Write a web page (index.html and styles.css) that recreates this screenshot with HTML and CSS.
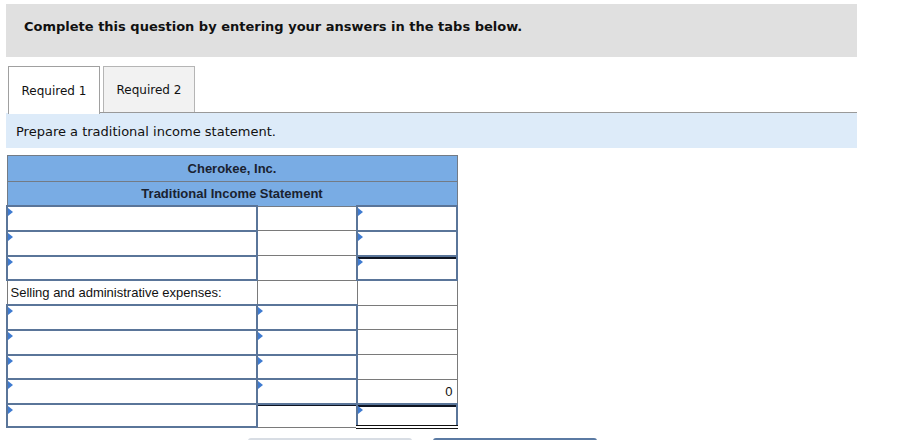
FILE: index.html
```html
<!DOCTYPE html>
<html>
<head>
<meta charset="utf-8">
<link rel="stylesheet" href="styles.css">
</head>
<body>
<div class="page">
  <div class="instr">Complete this question by entering your answers in the tabs below.</div>
  <div class="tabs">
    <div class="tab active">Required 1</div>
    <div class="tab">Required 2</div>
    <div class="tabline"></div>
  </div>
  <div class="prompt">Prepare a traditional income statement.</div>
  <table class="stmt">
    <colgroup><col class="c1"><col class="c2"><col class="c3"></colgroup>
    <tr class="h1"><th colspan="3">Cherokee, Inc.</th></tr>
    <tr class="h2"><th colspan="3">Traditional Income Statement</th></tr>
    <tr><td class="in"></td><td></td><td class="in"></td></tr>
    <tr><td class="in"></td><td></td><td class="in"></td></tr>
    <tr><td class="in"></td><td></td><td class="in topline"></td></tr>
    <tr><td class="label">Selling and administrative expenses:</td><td></td><td></td></tr>
    <tr><td class="in"></td><td class="in"></td><td></td></tr>
    <tr><td class="in"></td><td class="in"></td><td></td></tr>
    <tr><td class="in"></td><td class="in"></td><td></td></tr>
    <tr><td class="in"></td><td class="in"></td><td class="num">0</td></tr>
    <tr class="last"><td class="in"></td><td class="topline thin"></td><td class="in topline dbl"></td></tr>
  </table>
  <div class="buttons">
    <div class="btn prev"></div>
    <div class="btn next"></div>
  </div>
</div>
</body>
</html>
```
FILE: styles.css
```css
html, body {
  margin: 0;
  padding: 0;
  background: #fff;
}
.page {
  padding: 4px 0 0 6px;
  width: 851px;
  font-family: "DejaVu Sans", Verdana, sans-serif;
  color: #111;
}
.instr {
  background: #e0e0e0;
  height: 53px;
  box-sizing: border-box;
  padding: 15px 0 0 18px;
  font-weight: bold;
  font-size: 13px;
  line-height: 16px;
}
.tabs {
  display: flex;
  align-items: flex-end;
  margin-top: 8px;
  padding-left: 2px;
  height: 48px;
}
.tab {
  width: 92px;
  height: 47px;
  box-sizing: border-box;
  border: 1px solid #b5b5b5;
  border-bottom: none;
  background: #f2f2f2;
  font-size: 12px;
  display: flex;
  align-items: center;
  justify-content: center;
  color: #111;
}
.tab.active {
  background: #fff;
  border-color: #a0a0a0;
  height: 48px;
  margin-bottom: -1px;
  position: relative;
  z-index: 1;
}
.tab.active + .tab { margin-left: 3px; }
.tabline {
  flex: 1;
  height: 0;
  border-bottom: 1px solid #999;
  margin-left: -95px;
}
.prompt {
  background: #ddebf9;
  height: 35px;
  box-sizing: border-box;
  padding: 11px 0 0 10px;
  font-size: 13px;
  line-height: 16px;
}
.stmt {
  margin-top: 7px;
  border-collapse: collapse;
  table-layout: fixed;
  width: 450px;
  font-family: "Liberation Sans", Arial, sans-serif;
  font-size: 13px;
  color: #111;
}
col.c1 { width: 250px; }
col.c2 { width: 100px; }
col.c3 { width: 100px; }
.stmt th {
  background: #79ace4;
  border: 1px solid #737b85;
  font-weight: bold;
  color: #1a2230;
  padding: 0;
}
.stmt tr.h1 th { height: 25px; }
.stmt tr.h2 th { height: 23px; }
.stmt td {
  border: 1px solid #7a7a7a;
  height: 22.75px;
  padding: 0 3px;
  position: relative;
}
.stmt tr.last td { height: 20px; }
.stmt td.in {
  border: 2px solid #5a7599;
}
.stmt td.in::before {
  content: "";
  position: absolute;
  left: 0;
  top: 1px;
  border-left: 5px solid #3f7bd0;
  border-top: 4px solid transparent;
  border-bottom: 4px solid transparent;
}
.stmt td.topline {
  box-shadow: inset 0 2px 0 #0e1422;
}
.stmt td.topline.thin {
  box-shadow: inset 0 1px 0 #0e1422;
}
.stmt td.dbl {
  border-bottom: 4px double #111;
}
.stmt td.label {
  padding-left: 3px;
  vertical-align: middle;
}
.stmt td.num {
  text-align: right;
  padding-right: 4px;
}
.buttons {
  display: flex;
  margin-top: 9px;
  padding-left: 242px;
  gap: 21px;
}
.btn {
  width: 164px;
  height: 30px;
  border-radius: 3px;
}
.btn.prev {
  background: #f4f6f9;
  border-top: 2px solid #d8dde4;
}
.btn.next {
  background: #fff;
  border-top: 2px solid #5b7aa3;
}
```
